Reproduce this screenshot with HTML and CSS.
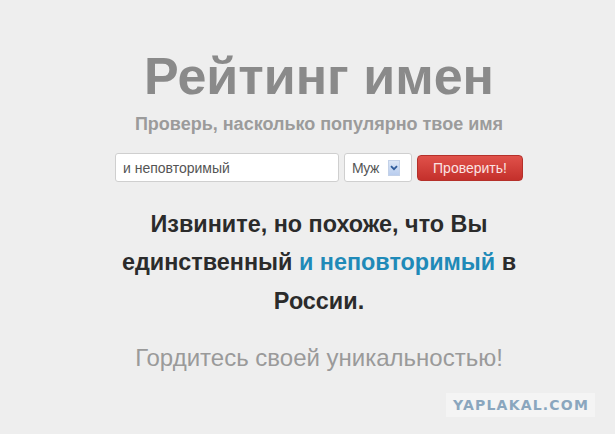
FILE: index.html
```html
<!DOCTYPE html>
<html lang="ru">
<head>
<meta charset="utf-8">
<title>Рейтинг имен</title>
<link rel="stylesheet" href="styles.css">
</head>
<body>
<div class="page">
  <h1 class="title">Рейтинг имен</h1>
  <p class="subtitle">Проверь, насколько популярно твое имя</p>
  <form class="search">
    <div class="field">и неповторимый</div>
    <div class="select">
      <span class="select-text">Муж</span>
      <span class="select-arrow">
        <svg width="8" height="6" viewBox="0 0 8 6"><path d="M1 1.2 L4 4.2 L7 1.2" fill="none" stroke="#2d5a9a" stroke-width="1.8"/></svg>
      </span>
    </div>
    <div class="button">Проверить!</div>
  </form>
  <p class="result">Извините, но похоже, что Вы единственный <span class="name">и неповторимый</span> в России.</p>
  <p class="proud">Гордитесь своей уникальностью!</p>
</div>
<div class="watermark">YAPLAKAL.COM</div>
</body>
</html>
```
FILE: styles.css
```css
html, body {
  margin: 0;
  padding: 0;
}
body {
  background: #eeeeee;
  font-family: "Liberation Sans", Arial, sans-serif;
  width: 615px;
  height: 434px;
  overflow: hidden;
  position: relative;
}
.page {
  padding-left: 23px;
  padding-top: 50px;
  display: flex;
  flex-direction: column;
  align-items: center;
  text-align: center;
}
.title {
  margin: 0;
  font-size: 52px;
  line-height: 52px;
  font-weight: bold;
  color: #8a8a8a;
}
.subtitle {
  margin: 13px 0 0;
  font-size: 18px;
  line-height: 18px;
  font-weight: bold;
  color: #9b9b9b;
}
.search {
  margin: 20px 0 0;
  display: flex;
  align-items: flex-start;
}
.field {
  box-sizing: border-box;
  width: 224px;
  height: 29px;
  background: #fff;
  border: 1px solid #cfcfcf;
  border-radius: 3px;
  font-size: 14px;
  color: #555;
  text-align: left;
  padding: 6px 0 0 7px;
}
.select {
  box-sizing: border-box;
  margin-left: 5px;
  width: 68px;
  height: 29px;
  background: #fff;
  border: 1px solid #cfcfcf;
  border-radius: 3px;
  display: flex;
  align-items: center;
  padding-left: 7px;
}
.select-text {
  font-size: 14px;
  color: #555;
  letter-spacing: -0.5px;
}
.select-arrow {
  margin-left: 9px;
  width: 12px;
  height: 16px;
  background: linear-gradient(#dbe6f6, #b9cdee);
  border: 1px solid #c3d1e8;
  box-sizing: border-box;
  display: flex;
  align-items: center;
  justify-content: center;
}
.button {
  box-sizing: border-box;
  margin: 2px 0 0 5px;
  width: 106px;
  height: 26px;
  border-radius: 4px;
  background: linear-gradient(#e0514a, #c4302b);
  border: 1px solid #b5302a;
  color: #fbe3e2;
  font-size: 14px;
  line-height: 24px;
}
.result {
  margin: 22.6px 0 0;
  width: 410px;
  font-size: 23.4px;
  line-height: 38.5px;
  font-weight: bold;
  color: #2b2b2b;
}
.name {
  color: #1f8ab8;
}
.proud {
  margin: 25.7px 0 0;
  font-size: 24px;
  line-height: 24px;
  color: #9a9a9a;
}
.watermark {
  position: absolute;
  left: 446px;
  top: 393px;
  padding: 4px 6px 4px 7px;
  background: #f4f4f4;
  font-family: "DejaVu Sans", sans-serif;
  font-weight: bold;
  font-size: 14px;
  line-height: 16px;
  letter-spacing: 1.2px;
  color: #8aa6be;
}
```
